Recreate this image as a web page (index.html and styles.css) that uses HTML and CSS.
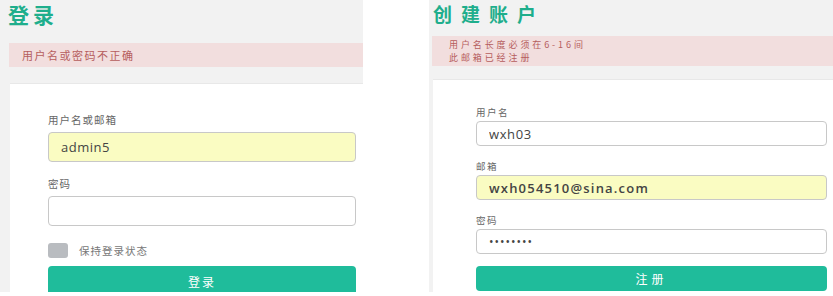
FILE: index.html
```html
<!DOCTYPE html>
<html lang="zh-CN">
<head>
    <meta charset="UTF-8">
    <meta name="viewport" content="width=device-width, initial-scale=1.0">
    <title>登录 / 创建账户</title>
    <link rel="stylesheet" href="styles.css">
</head>
<body>

    <!-- Login -->
    <div class="panel login">
        <h2 class="title">登录</h2>
        <div class="alert">用户名或密码不正确</div>
        <div class="card">
            <label class="label">用户名或邮箱</label>
            <input class="field filled" type="text" value="admin5">
            <label class="label">密码</label>
            <input class="field" type="password">
            <div class="remember">
                <input type="checkbox" class="check">
                <span>保持登录状态</span>
            </div>
            <button class="submit">登录</button>
        </div>
    </div>

    <!-- Register -->
    <div class="panel register">
        <h2 class="title">创建账户</h2>
        <div class="alert">
            <p>用户名长度必须在6-16间</p>
            <p>此邮箱已经注册</p>
        </div>
        <div class="card">
            <label class="label">用户名</label>
            <input class="field" type="text" value="wxh03">
            <label class="label">邮箱</label>
            <input class="field filled" type="text" value="wxh054510@sina.com">
            <label class="label">密码</label>
            <input class="field" type="password" value="12345678">
            <button class="submit">注册</button>
        </div>
    </div>

</body>
</html>
```

FILE: styles.css
```css
body {
    margin: 0;
    display: flex;
    align-items: flex-start;
    background: #fff;
    font-family: "Noto Sans CJK SC", "Noto Sans", sans-serif;
}

.panel {
    height: 292px;
    overflow: hidden;
    background: #f2f2f2;
    display: flex;
    flex-direction: column;
}

.title {
    flex-shrink: 0;
    margin: 0;
    color: #1eae8c;
    font-weight: bold;
}

.alert {
    flex-shrink: 0;
    background: #f2dede;
    color: #b65d5d;
    display: flex;
    flex-direction: column;
    justify-content: center;
}
.alert p {
    margin: 0;
}

.card {
    flex: 1;
    min-height: 0;
    overflow: hidden;
    background: #fff;
    border-top: 1px solid #e8e8e8;
    display: flex;
    flex-direction: column;
}

.label {
    flex-shrink: 0;
    color: #666;
}

.field {
    flex-shrink: 0;
    box-sizing: border-box;
    width: 100%;
    margin: 0;
    padding: 0 12px;
    border: 1.5px solid #c8c8c8;
    border-radius: 4px;
    background: #fff;
    color: #444;
    font-family: "Open Sans", "Noto Sans", sans-serif;
    outline: none;
}
.field.filled {
    background: #fafcc2;
}

.submit {
    flex-shrink: 0;
    border: none;
    border-radius: 4px;
    background: #1fbc9b;
    color: #fff;
    font-family: "Noto Sans CJK SC", sans-serif;
    cursor: pointer;
}

/* Login panel */
.login {
    width: 354px;
    padding-left: 9px;
}
.login .title {
    font-size: 21px;
    line-height: 28px;
    letter-spacing: 4px;
    margin-left: -1px;
}
.login .alert {
    margin-top: 15px;
    height: 24px;
    padding-left: 13px;
    font-size: 11px;
    letter-spacing: 1.5px;
}
.login .card {
    margin-top: 16px;
    margin-left: 1px;
    padding: 29px 7px 0 38px;
}
.login .label {
    font-size: 10.5px;
    line-height: 14px;
    letter-spacing: 1px;
    margin-bottom: 5px;
}
.login .field {
    height: 30px;
    margin-bottom: 15px;
    font-size: 13px;
    letter-spacing: 0.5px;
}
.remember {
    flex-shrink: 0;
    display: flex;
    align-items: center;
    gap: 11px;
    height: 18px;
    color: #777;
    font-size: 10.5px;
    letter-spacing: 1px;
}
.check {
    appearance: none;
    margin: 0;
    width: 20px;
    height: 15px;
    border-radius: 3px;
    background: #b9bcc0;
}
.login .submit {
    margin-top: 7px;
    height: 30px;
    font-size: 12px;
    letter-spacing: 2px;
}

/* Register panel */
.register {
    width: 401px;
    margin-left: 66px;
    padding-left: 3px;
}
.register .title {
    font-size: 19px;
    line-height: 27px;
    letter-spacing: 9px;
    margin-left: 1px;
}
.register .alert {
    margin-top: 9px;
    height: 30px;
    padding-left: 17px;
    font-size: 9px;
    line-height: 13px;
    letter-spacing: 2.9px;
}
.register .card {
    margin-top: 13px;
    margin-left: 1px;
    padding: 26px 6px 0 43px;
}
.register .label {
    font-size: 9.5px;
    line-height: 12px;
    letter-spacing: 1.5px;
    margin-bottom: 3px;
}
.register .field {
    height: 25px;
    margin-bottom: 14px;
    font-size: 13px;
    letter-spacing: 0.6px;
}
.register .field.filled {
    font-weight: 600;
    letter-spacing: 1.2px;
}
.register input[type="password"] {
    font-size: 12px;
    letter-spacing: 1px;
}
.register .submit {
    margin-top: -2px;
    height: 25px;
    font-size: 12px;
    letter-spacing: 4px;
}
```
